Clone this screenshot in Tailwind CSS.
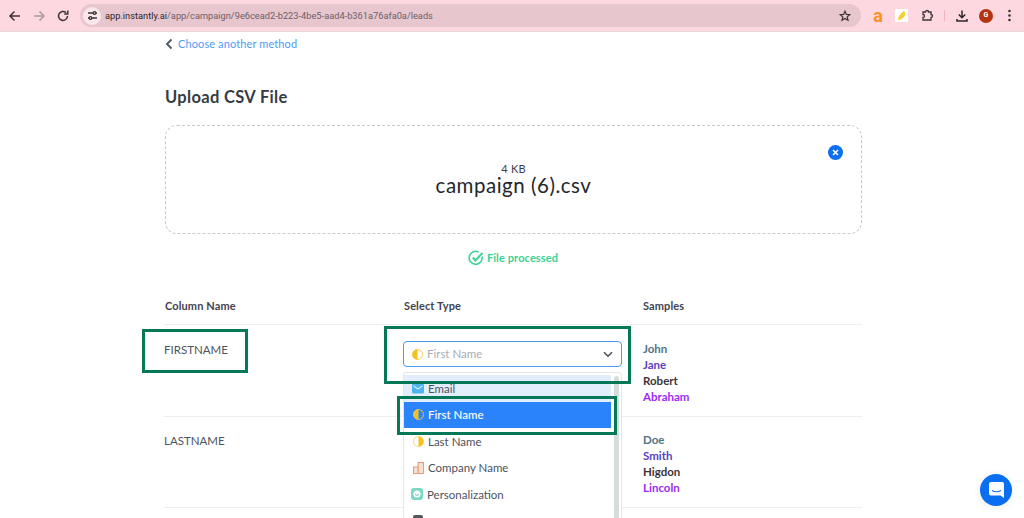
<!doctype html>
<html><head><meta charset="utf-8"><script src="https://cdn.jsdelivr.net/npm/@tailwindcss/browser@4"></script></head>
<body class="m-0 bg-white overflow-hidden font-['Lato','Liberation_Sans',sans-serif]">
<div class="relative w-[1024px] h-[518px] overflow-hidden">
  <!-- browser bar -->
  <div class="h-[32px] bg-[#fdd8e0] border-b border-[#e8d8dc] flex items-center font-['Roboto',sans-serif]">
    <div class="w-[80px] shrink-0 flex items-center pl-[8px] gap-[10px]">
      <svg class="w-[14px] h-[14px]" viewBox="0 0 14 14" fill="none" stroke="#3c3438" stroke-width="1.500"><path d="M12 7H2M6.500 2.500 2 7l4.500 4.500"/></svg>
      <svg class="w-[14px] h-[14px]" viewBox="0 0 14 14" fill="none" stroke="#a89ca0" stroke-width="1.500"><path d="M2 7h10M7.500 2.500 12 7l-4.500 4.500"/></svg>
      <svg class="w-[14px] h-[14px]" viewBox="0 0 14 14" fill="none" stroke="#3c3438" stroke-width="1.500"><path d="M11.500 7A4.500 4.500 0 1 1 10 3.600"/><path d="M11.800 1.500V5H8.300"/></svg>
    </div>
    <div class="w-[781px] h-[23px] rounded-full bg-[#e8c6cd] flex items-center pl-[3px] pr-[10px]">
      <div class="w-[18px] h-[18px] rounded-full bg-[#fbe6ea] flex items-center justify-center">
        <svg class="w-[11px] h-[11px]" viewBox="0 0 11 11" fill="none" stroke="#3c3438" stroke-width="1.300"><path d="M1 3h5M9 3h1M1 8h1M5 8h5"/><circle cx="7.500" cy="3" r="1.300"/><circle cx="3.500" cy="8" r="1.300"/></svg>
      </div>
      <div class="ml-[4px] text-[9.250px] text-[#6d6066] whitespace-nowrap"><span class="text-[#2c2629]">app.instantly.ai</span>/app/campaign/9e6cead2-b223-4be5-aad4-b361a76afa0a/leads</div>
      <svg class="ml-auto w-[12px] h-[12px]" viewBox="0 0 12 12" fill="none" stroke="#3c3438" stroke-width="1.200"><path d="M6 1.200 7.400 4.400l3.400.3-2.600 2.200.8 3.400L6 8.500l-3 1.800.8-3.400L1.200 4.700l3.400-.3z"/></svg>
    </div>
    <div class="flex items-center flex-1 pl-[10px]">
      <div class="w-[14px] h-[14px] flex items-center justify-center text-[#f7931e] text-[18px] font-bold leading-none">a</div>
      <div class="ml-[10px] w-[13px] h-[13px] bg-white flex items-center justify-center">
        <svg class="w-[11px] h-[11px]" viewBox="0 0 10 10"><path d="M1.500 9 3 5l4-4 1.500 1.500-.5 3-3 3z" fill="#f5cf2e"/></svg>
      </div>
      <svg class="ml-[13px] w-[13px] h-[13px]" viewBox="0 0 13 13" fill="none" stroke="#3c3438" stroke-width="1.300"><path d="M2 3h2.500a1.500 1.500 0 0 1 3 0H10v2.500a1.500 1.500 0 0 1 0 3V11H2V8.500a1.500 1.500 0 0 0 0-3z"/></svg>
      <div class="ml-[10px] w-px h-[11px] bg-[#f0b4c0]"></div>
      <svg class="ml-[10px] w-[14px] h-[14px]" viewBox="0 0 14 14" fill="none" stroke="#2c2629" stroke-width="1.500"><path d="M7 1.500v7M3.800 5.500 7 8.700l3.200-3.200M2 10v2h10v-2"/></svg>
      <div class="ml-[10px] w-[14px] h-[14px] rounded-full bg-[#b5330f] text-white text-[7px] font-bold flex items-center justify-center">G</div>
      <svg class="ml-[15px] w-[3px] h-[13px]" viewBox="0 0 3 13" fill="#3c3438"><circle cx="1.500" cy="2" r="1.300"/><circle cx="1.500" cy="6.500" r="1.300"/><circle cx="1.500" cy="11" r="1.300"/></svg>
    </div>
  </div>

  <!-- page -->
  <div class="ml-[164px] w-[698px]">
    <div class="flex items-center h-[24px] ml-px gap-[5px] text-[#4f9bf7] text-[11px] tracking-[0.01em]">
      <svg class="w-[8px] h-[12px]" viewBox="0 0 8 12" fill="none" stroke="#4e5662" stroke-width="1.800"><path d="M6.500 1.500 2 6l4.500 4.500"/></svg>
      <span>Choose another method</span>
    </div>
    <h1 class="mt-[29px] pl-px text-[16.500px] leading-[24px] font-bold text-[#353a45] tracking-[0.02em]">Upload CSV File</h1>
    <div class="mt-[16px] ml-px h-[109px] rounded-[12px] border border-dashed border-[#c8c8c8] relative flex flex-col items-center pt-[36px]">
      <div class="text-[11px] leading-[14px] text-[#3c3f48] tracking-[0.02em]">4 KB</div>
      <div class="text-[20.500px] leading-[18px] text-[#24262d] tracking-[0.025em]">campaign (6).csv</div>
      <div class="absolute right-[18px] top-[19px] w-[15px] h-[15px] rounded-full bg-[#0b6ff0] flex items-center justify-center">
        <svg class="w-[7px] h-[7px]" viewBox="0 0 7 7" stroke="#fff" stroke-width="1.600"><path d="M1 1l5 5M6 1 1 6"/></svg>
      </div>
    </div>
    <div class="mt-[15px] h-[18px] flex items-center justify-center gap-[3px] text-[#3bd296] text-[11px] font-bold tracking-[0.01em]">
      <svg class="w-[16px] h-[16px]" viewBox="0 0 16 16" fill="none" stroke="#3bd296" stroke-width="1.600"><path d="M14 6.500A6.500 6.500 0 1 1 10.500 2"/><path d="M4.800 7.500 7.500 10.500 14.500 2.800" stroke-width="2"/></svg>
      <span>File processed</span>
    </div>

    <div class="mt-[25px] grid grid-cols-[239px_239px_1fr] h-[33px] border-b border-[#eeeeee] text-[11px] font-bold text-[#3f4450] tracking-[0.01em] pt-[2px] leading-[24px]">
      <div class="pl-px">Column Name</div><div class="pl-px">Select Type</div><div class="pl-px">Samples</div>
    </div>
    <div class="grid grid-cols-[239px_239px_1fr] h-[92px] border-b border-[#eeeeee]">
      <div class="text-[11.500px] text-[#4e5361] pt-[15px] leading-[20px]">FIRSTNAME</div>
      <div class="pt-[16px]">
        <div class="w-[219px] h-[26px] rounded-[4px] border-[1.500px] border-[#4d9af5] flex items-center pl-[8px] pr-[8px] gap-[4px]">
          <svg class="w-[11px] h-[11px]" viewBox="0 0 11 11"><circle cx="5.500" cy="5.500" r="5" fill="#fff" stroke="#f6c945"/><path d="M5.500.5a5 5 0 0 0 0 10z" fill="#f6c21f"/></svg>
          <span class="text-[11.500px] text-[#a9adb5]">First Name</span>
          <svg class="ml-auto w-[10px] h-[7px]" viewBox="0 0 10 7" fill="none" stroke="#4a4f5b" stroke-width="1.600"><path d="M1 1.200 5 5.200 9 1.200"/></svg>
        </div>
      </div>
      <div class="pt-[16px] pl-px text-[11.500px] font-bold leading-[16px]">
        <div class="text-[#4f7487]">John</div><div class="text-[#5a3fc0]">Jane</div><div class="text-[#3d3438]">Robert</div><div class="text-[#9b2cf5]">Abraham</div>
      </div>
    </div>
    <div class="grid grid-cols-[239px_239px_1fr] h-[91px] border-b border-[#eeeeee]">
      <div class="text-[11.500px] text-[#4e5361] pt-[14px] leading-[20px]">LASTNAME</div>
      <div></div>
      <div class="pt-[15px] pl-px text-[11.500px] font-bold leading-[16px]">
        <div class="text-[#4f7487]">Doe</div><div class="text-[#5a3fc0]">Smith</div><div class="text-[#3d3438]">Higdon</div><div class="text-[#9b2cf5]">Lincoln</div>
      </div>
    </div>
  </div>

  <!-- dropdown -->
  <div class="absolute left-[403px] top-[372px] w-[219px] h-[150px] bg-white border border-[#e6e6e6] rounded-t-[3px] text-[11.500px] text-[#4e5361]">
    <div class="absolute right-[2px] top-[3px] bottom-0 w-[5px] bg-[#d5dcdc] rounded-full"></div>
    <div class="mr-[10px] mt-[2px] h-[26.500px] bg-[#e3eefd] flex items-center pl-[8px] gap-[4px]">
      <svg class="w-[12px] h-[11px]" viewBox="0 0 12 11"><rect width="12" height="10" y=".5" rx="1.500" fill="#4fb3ee"/><path d="M1.500 3 6 6l4.500-3" fill="none" stroke="#fff"/></svg><span>Email</span>
    </div>
    <div class="mr-[10px] h-[26.500px] bg-[#2a83fb] text-white flex items-center pl-[9px] gap-[4px] font-medium">
      <svg class="w-[11px] h-[11px]" viewBox="0 0 11 11"><circle cx="5.500" cy="5.500" r="5" fill="#2a83fb" stroke="#e8c65a"/><path d="M5.500.5a5 5 0 0 0 0 10z" fill="#f6c21f"/></svg><span>First Name</span>
    </div>
    <div class="mr-[10px] h-[26.500px] flex items-center pl-[9px] gap-[4px]">
      <svg class="w-[11px] h-[11px]" viewBox="0 0 11 11"><circle cx="5.500" cy="5.500" r="5" fill="#fff" stroke="#f6d96a"/><path d="M5.500.5a5 5 0 0 1 0 10z" fill="#f6c21f"/></svg><span>Last Name</span>
    </div>
    <div class="mr-[10px] h-[26.500px] flex items-center pl-[9px] gap-[4px]">
      <svg class="w-[11px] h-[12px]" viewBox="0 0 11 12" fill="#f9e0d0" stroke="#d9986f" stroke-width=".9"><rect x="5" y=".5" width="5.500" height="11"/><rect x=".5" y="5" width="4.500" height="6.500"/></svg><span>Company Name</span>
    </div>
    <div class="mr-[10px] h-[26.500px] flex items-center pl-[7px] gap-[4px]">
      <svg class="w-[12px] h-[12px]" viewBox="0 0 12 12"><rect width="12" height="12" rx="3" fill="#7ad9c4"/><circle cx="6" cy="6" r="3.600" fill="#fff"/><path d="M4 6.500q2 1.500 4 0" fill="none" stroke="#4aa" stroke-width=".8"/></svg><span>Personalization</span>
    </div>
    <div class="mr-[10px] h-[26.500px] flex items-center pl-[9px]">
      <div class="w-[10px] h-[12px] rounded-[2px] bg-[#55585f]"></div>
    </div>
  </div>

  <!-- annotation boxes -->
  <div class="absolute left-[142px] top-[329px] w-[106px] h-[44px] border-[3px] border-[#047857]"></div>
  <div class="absolute left-[384px] top-[326px] w-[247px] h-[58px] border-[3px] border-[#047857]"></div>
  <div class="absolute left-[397px] top-[396px] w-[220px] h-[39px] border-[3px] border-[#047857]"></div>

  <!-- chat -->
  <div class="absolute left-[980px] top-[474px] w-[32px] h-[32px] rounded-full bg-[#0a6ef0] flex items-center justify-center shadow-[0_1px_8px_rgba(0,0,0,0.08)]">
    <svg class="w-[15px] h-[16px]" viewBox="0 0 15 16"><path d="M2 0h11a2 2 0 0 1 2 2v14l-3.500-2.500H2a2 2 0 0 1-2-2V2a2 2 0 0 1 2-2z" fill="#fff"/><path d="M3 8.500q4.500 2.500 9 0" fill="none" stroke="#0a6ef0" stroke-width="1.100"/></svg>
  </div>
</div>
</body></html>
